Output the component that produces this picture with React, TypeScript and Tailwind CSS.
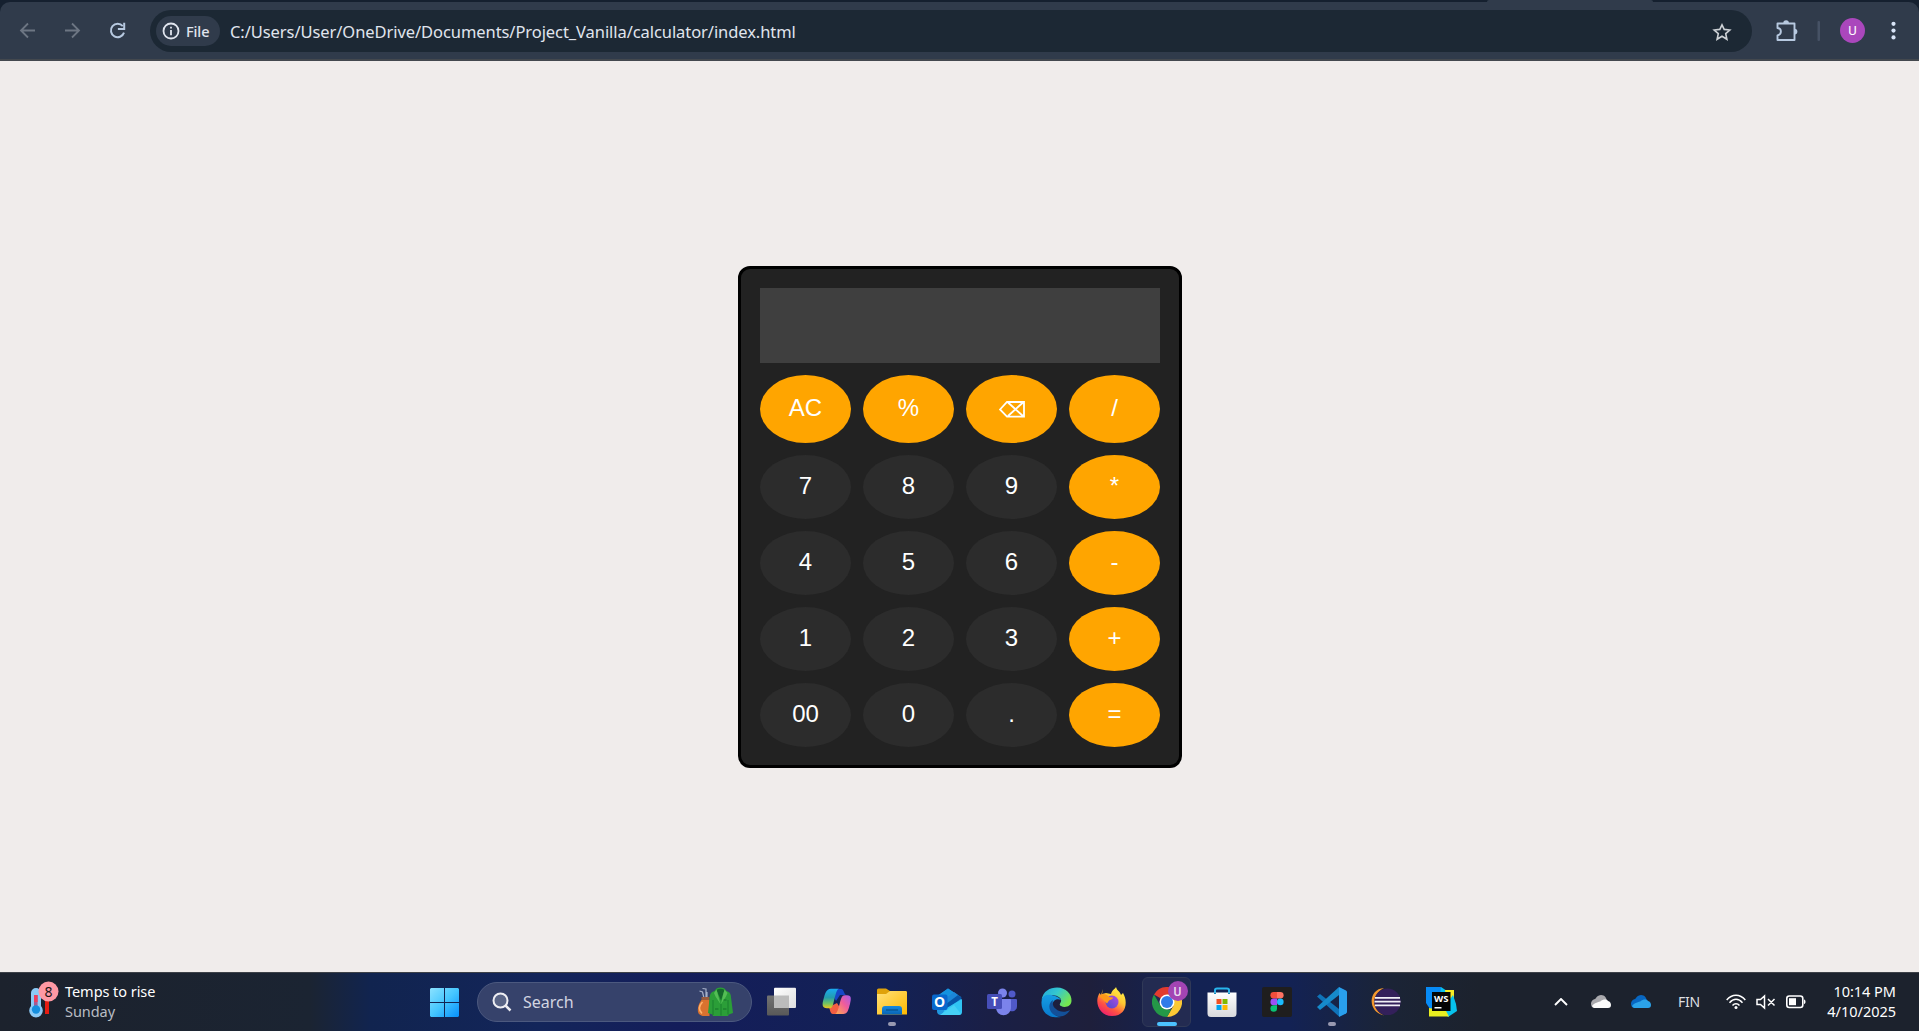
import React from "react";

const calculatorRows: string[][] = [
  ["AC", "%", "DEL", "/"],
  ["7", "8", "9", "*"],
  ["4", "5", "6", "-"],
  ["1", "2", "3", "+"],
  ["00", "0", ".", "="],
];

function BackspaceIcon() {
  return (
    <svg width="26" height="17" viewBox="0 0 26 17" fill="none" stroke="#fff" strokeWidth="1.8" className="mt-[3px]">
      <path d="M1 8.5 8 1H25V15.6H8ZM9 1.5 24 15M24 1.5 9 15" />
    </svg>
  );
}

function Calculator() {
  return (
    <section className="flex h-[502px] w-[444px] flex-col gap-3 rounded-xl border-[3px] border-black bg-[#222222] p-[19px] text-2xl text-white [font-family:'Liberation_Sans',Arial,sans-serif]">
      <div className="h-[75px] shrink-0 bg-[#3f3f3f]" />
      {calculatorRows.map((row, r) => (
        <div key={r} className={`grid shrink-0 grid-cols-4 gap-3 ${r === 0 ? "h-[68px]" : "h-16"}`}>
          {row.map((label, c) => (
            <button
              key={label}
              className={`flex items-center justify-center rounded-[50%] pb-[2px] leading-none ${r === 0 || c === 3 ? "bg-[#ffa500]" : "bg-[#2c2c2c]"}`}
            >
              {label === "DEL" ? <BackspaceIcon /> : label}
            </button>
          ))}
        </div>
      ))}
    </section>
  );
}

function BrowserBar() {
  return (
    <header className="flex h-[61px] shrink-0 flex-col bg-[#15202f]">
      <div className="flex h-[2px] justify-end pr-[266px]">
        <div className="w-[166px] rounded-t bg-[#303b4b]" />
      </div>
      <div className="flex h-[59px] items-start rounded-t-[10px] border-b-2 border-[#43484e] bg-[#303b4b] pt-2">
        <svg width="150" height="42" viewBox="0 0 150 42" fill="none">
          <path d="M35 20.5H21M28 13.5l-7 7 7 7" stroke="#6d7683" strokeWidth="1.8" />
          <path d="M65 20.5H79M72 13.5l7 7-7 7" stroke="#6d7683" strokeWidth="1.8" />
          <path d="M122.8 16.2A6.7 6.7 0 1 0 124 22.6" stroke="#b7c9e0" strokeWidth="2" />
          <path d="M124.2 12.8v6.3h-6.3" stroke="#b7c9e0" strokeWidth="2" />
        </svg>
        <div className="flex h-[42px] w-[1602px] items-center rounded-full bg-[#1c2834] pl-[6px] pr-[20px]">
          <div className="flex h-[30px] w-16 items-center rounded-full bg-[#303b4b] pl-[6px]">
            <svg width="18" height="18" viewBox="0 0 18 18" fill="none" stroke="#e0e5ee" strokeWidth="1.8">
              <circle cx="9" cy="9" r="7.5" />
              <path d="M9 8v5.2M9 4.7v1.8" />
            </svg>
            <span className="ml-[6px] text-[14.5px] font-medium leading-[18px] tracking-[-0.1px] text-[#e0e5ee] [font-family:'Noto_Sans',sans-serif]">File</span>
          </div>
          <span className="ml-[10px] whitespace-nowrap pt-px text-[16.5px] leading-6 tracking-[-0.07px] text-[#e0e5ee] [font-family:'Noto_Sans',sans-serif]">
            C:/Users/User/OneDrive/Documents/Project_Vanilla/calculator/index.html
          </span>
          <svg className="ml-auto mt-[2px]" width="20" height="20" viewBox="0 0 20 20" fill="none" stroke="#cdd1d5" strokeWidth="1.6">
            <path d="M10 2.8 12.2 7.4 17.8 8 13.7 11.6 14.9 17.3 10 14.3 5.1 17.3 6.3 11.6 2.2 8 7.8 7.4Z" />
          </svg>
        </div>
        <svg width="167" height="42" viewBox="0 0 167 42" fill="none">
          <path d="M25.5 13.5H42.5V30H25.5V25.5C30 24.5 30 18.5 25.5 18V13.5Z" stroke="#b7c9e0" strokeWidth="1.9" strokeLinejoin="round" />
          <path d="M31.3 13a2.8 2.8 0 0 1 5.6 0ZM42.5 18.7a2.9 2.9 0 0 1 0 5.8Z" fill="#b7c9e0" />
          <rect x="65.5" y="11" width="2.5" height="20" rx="1" fill="#465265" />
          <circle cx="100.5" cy="20.5" r="12.5" fill="#aa47bc" />
          <text x="100.5" y="25.2" textAnchor="middle" fontSize="13" fill="#fff" fontFamily="Roboto, sans-serif">U</text>
          <g fill="#d8e4f7">
            <circle cx="141.5" cy="13.8" r="2.1" />
            <circle cx="141.5" cy="20.6" r="2.1" />
            <circle cx="141.5" cy="27.4" r="2.1" />
          </g>
        </svg>
      </div>
    </header>
  );
}

function WeatherIcon() {
  return (
    <svg width="32" height="40" viewBox="0 0 32 40" className="-mt-[2px]">
      <path d="M18 18h4v15h-4z" fill="#e51c12" />
      <path d="M17 20l3-3 4 3z" fill="#e51c12" />
      <path d="M4 12a5 5 0 0 1 10 0v13a6.8 6.8 0 1 1-10 0Z" fill="#8ccaf6" />
      <path d="M7 14h3.6v14H7z" fill="#a55a93" />
      <path d="M7 14h3.6v7H7z" fill="#ee3d5c" />
      <circle cx="9" cy="28.5" r="4.2" fill="#158fdf" />
      <circle cx="21.5" cy="10.5" r="10" fill="#fe99a4" />
      <text x="21.5" y="15.6" textAnchor="middle" fontSize="14" fill="#1a1516" fontFamily="Noto Sans, sans-serif">8</text>
    </svg>
  );
}

function StartIcon() {
  return (
    <svg width="29" height="29" viewBox="0 0 29 29">
      <defs>
        <linearGradient id="start" x1="0" y1="0" x2="29" y2="29" gradientUnits="userSpaceOnUse">
          <stop stopColor="#8be2ff" />
          <stop offset=".5" stopColor="#45c6ff" />
          <stop offset="1" stopColor="#0790fb" />
        </linearGradient>
      </defs>
      <path fill="url(#start)" d="M1 0H14V14H0V1ZM15 0H28L29 1V14H15ZM0 15H14V29H1L0 28ZM15 15H29V28L28 29H15Z" />
    </svg>
  );
}

function GolfIcon() {
  return (
    <svg width="36" height="30" viewBox="0 0 36 30">
      <g stroke="#a6b0c9" strokeWidth="1.2" fill="none">
        <path d="M7 11 5.5 5 2.5 4M9 11V2L5.5 1.5M10 10V5" />
      </g>
      <path d="M4.5 10h8v3.5h-8z" fill="#9a5a3c" />
      <path d="M4.5 13h8v16H5.5C2 28 .5 26 .8 22.5 1 18 3 15 4.5 13z" fill="#d9722f" />
      <path d="M5.5 15c-4 4-4 8-.5 11.5" fill="none" stroke="#ffb06a" strokeWidth="1.6" />
      <path d="M17.5 4C19 1.5 20.5.5 23.5.5S28 1.5 29.5 4c2.5.8 3.8 2 4.3 4.5L36 26l-4.2 1.5-.8 1.5H16l-.6-1.5L11 26l1.8-17c.4-2.8 2-4.3 4.7-5Z" fill="#2b9e38" />
      <path d="M19.5 3c2.5-1.8 5.5-1.8 8 0L24 13.5Z" fill="#14692a" />
      <path d="M19.5 2.5 17 6l1.5 3.5L23.5 17 21 8ZM27.5 2.5 30.5 6l-1.5 3.5L24 17l2-9Z" fill="#54bd55" />
      <path d="M16 13v15M31 13v14.5M24 17v11.5" stroke="#187a2c" strokeWidth=".9" />
      <path d="M26.5 13h3M26 22h3.5M18 22h3.5" stroke="#157029" />
    </svg>
  );
}

function TaskViewIcon() {
  return (
    <svg width="30" height="30" viewBox="0 0 30 30">
      <defs>
        <linearGradient id="tv" x1="0" y1="0" x2="1" y2="1"><stop stopColor="#fff" /><stop offset="1" stopColor="#dedede" /></linearGradient>
        <linearGradient id="tv2" x1="0" y1="0" x2="0" y2="1"><stop stopColor="#737373" /><stop offset="1" stopColor="#585858" /></linearGradient>
      </defs>
      <rect y="8.5" width="22" height="20" rx="1" fill="url(#tv2)" />
      <rect x="7" y=".7" width="22" height="20.3" rx="1" fill="url(#tv)" />
      <path d="M7 8.5h15V21H7z" fill="#bcbcbc" />
    </svg>
  );
}

function CopilotIcon() {
  return (
    <svg width="30" height="30" viewBox="0 0 30 30">
      <defs>
        <linearGradient id="cpa" x1="0" y1="0" x2="0" y2="1"><stop stopColor="#1aaaf0" /><stop offset=".45" stopColor="#249cac" /><stop offset=".75" stopColor="#6fc264" /><stop offset="1" stopColor="#eec51c" /></linearGradient>
        <linearGradient id="cpb" x1="1" y1="0" x2="0" y2="1"><stop stopColor="#a55bee" /><stop offset=".45" stopColor="#ef5c9b" /><stop offset="1" stopColor="#ffb14a" /></linearGradient>
      </defs>
      <path d="M8 2h11c3 0 3 5 5 6h-6l-4 6z" fill="#1746c7" />
      <path d="M22 27H11c-3 0-3-5-4-7l8-4z" fill="#f35e42" />
      <path d="M9 1.8h8c-3 .7-4 9-6 16-1 3-2 3.5-4 3.5H5c-5 0-5-4-3.5-9C3 7 4 1.8 9 1.8Z" fill="url(#cpa)" />
      <path d="M21 27h-8c3-.7 4-9 6-15 1-3 2-3.8 4-3.8h2c5 0 4 4 3 8.8-1.5 5-2 10-7 10Z" fill="url(#cpb)" />
    </svg>
  );
}

function ExplorerIcon() {
  return (
    <svg width="30" height="30" viewBox="0 0 30 30">
      <defs>
        <linearGradient id="fe" x1="0" y1="0" x2="1" y2="1"><stop stopColor="#ffe17a" /><stop offset="1" stopColor="#ffb900" /></linearGradient>
        <linearGradient id="fb" x1="0" y1="0" x2="0" y2="1"><stop stopColor="#168ae0" /><stop offset="1" stopColor="#0964b4" /></linearGradient>
      </defs>
      <path d="M0 8V3a1.500 1.500 0 0 1 1.500-1.500H9L13 4h15a2 2 0 0 1 2 2v3z" fill="#dfa20a" />
      <path d="M0 7h9l4-3h16l1 1v22.500H0z" fill="url(#fe)" />
      <path d="M5 27.500V22a3 3 0 0 1 3-3h14a3 3 0 0 1 3 3v5.500z" fill="url(#fb)" />
      <path d="M9 23h12" stroke="#07508d" strokeWidth="1.2" />
    </svg>
  );
}

function OutlookIcon() {
  return (
    <svg width="30" height="30" viewBox="0 0 30 30">
      <path d="M5 9 16 1.500 29 10v15a3 3 0 0 1-3 3H9a4 4 0 0 1-4-4z" fill="#1f96df" />
      <path d="M6 9 16 1.500 21 5 11 12z" fill="#1492df" />
      <path d="m14 11 8-6 4 3-12 9z" fill="#1b86d8" />
      <path d="m14 17 12-9 4 3-15 11z" fill="#0755a9" />
      <path d="M13 22 30 12v13a3 3 0 0 1-3 3H10z" fill="#30c4f4" />
      <path d="m8 28 14-10 7 9-2 1z" fill="#45d0f6" />
      <rect y="7.500" width="15.500" height="15.500" rx="2" fill="#0868cd" />
      <text x="7.700" y="20" textAnchor="middle" fontSize="14" fontWeight="700" fill="#fff" fontFamily="Open Sans, sans-serif">O</text>
    </svg>
  );
}

function TeamsIcon() {
  return (
    <svg width="30" height="30" viewBox="0 0 30 30">
      <circle cx="25" cy="7" r="3.500" fill="#5059c9" />
      <circle cx="15.500" cy="6" r="4.500" fill="#7b83eb" />
      <path d="M20 12h9a1 1 0 0 1 1 1v6c0 4-3 6-7 5z" fill="#5059c9" />
      <path d="M10 12h13a1 1 0 0 1 1 1v7c0 11-15 11-15 0z" fill="#7b83eb" />
      <rect y="7" width="15" height="15" rx="1.500" fill="#464eb8" />
      <text x="7.500" y="18.500" textAnchor="middle" fontSize="11.500" fontWeight="700" fill="#fff" fontFamily="Open Sans, sans-serif">T</text>
    </svg>
  );
}

function EdgeIcon() {
  return (
    <svg width="31" height="31" viewBox="0 0 31 31">
      <defs>
        <linearGradient id="ea" x1="0" y1="0" x2="1" y2=".55"><stop stopColor="#20a5dc" /><stop offset=".5" stopColor="#35c8cf" /><stop offset="1" stopColor="#75e550" /></linearGradient>
        <linearGradient id="eb" x1="0" y1="0" x2="0" y2="1"><stop stopColor="#169ee4" /><stop offset="1" stopColor="#0879cd" /></linearGradient>
      </defs>
      <path d="M.5 13C2 4 9 .5 16 .5 25 .5 31 7 30.500 14c-.5 6-7 7-10.500 5-3-1.500.5-3 .1-6C19.500 8 5 5 .5 13Z" fill="url(#ea)" />
      <path d="M.5 15C1 6 10 7 14 9c3 1 5 2 6 4-4-2-9 0-9 7 0 6 4 10 9 10C8 32 0 25 .5 15Z" fill="url(#eb)" />
      <path d="M12 13c-8 5-2 19 10 16 3-1 6-4 7-6-5 3-11 2-14-1-3-2-4-6-3-9Z" fill="#135099" />
    </svg>
  );
}

function FirefoxIcon() {
  return (
    <svg width="30" height="30" viewBox="0 0 30 30">
      <defs>
        <linearGradient id="ff" x1=".8" y1="0" x2=".2" y2="1"><stop stopColor="#fff34a" /><stop offset=".38" stopColor="#ffc631" /><stop offset=".68" stopColor="#ff5441" /><stop offset="1" stopColor="#e91675" /></linearGradient>
        <linearGradient id="fp" x1="1" y1="0" x2="0" y2="1"><stop stopColor="#b44be0" /><stop offset="1" stopColor="#484ac9" /></linearGradient>
      </defs>
      <path d="m6 2-1 5 4-1 5 1c1-4 4-5 5-7 1 4 4 4 5 8l2-2c5 8 4 23-11 23C2 29-3 15 2.500 6L4 8z" fill="url(#ff)" />
      <circle cx="15" cy="15" r="6.500" fill="url(#fp)" />
      <path d="M2 9c4-3 8-2 10 1l4 .5c0 2-3 2-4 3l-2 3-4-4z" fill="#ff9819" />
    </svg>
  );
}

function ChromeIcon() {
  return (
    <svg width="30" height="30" viewBox="0 0 30 30">
      <path d="M15 15 2 7.500A15 15 0 0 1 28 7.500H15Z" fill="#e33b2e" />
      <path d="M15 15 28 7.500A15 15 0 0 1 15 30l6.500-11.250Z" fill="#fcc934" />
      <path d="M2 7.500 8.500 18.750 15 22.500h4.300L15 30A15 15 0 0 1 2 7.500Z" fill="#249847" />
      <path d="M15 7.500h13l-6.500 11.250z" fill="#fcc934" />
      <circle cx="15" cy="15" r="7.500" fill="#fff" />
      <circle cx="15" cy="15" r="6" fill="#2f7bea" />
    </svg>
  );
}

function ChromeWindow() {
  return (
    <div className="relative">
      <ChromeIcon />
      <span className="absolute -right-[6px] -top-[6px] flex h-5 w-5 items-center justify-center rounded-full bg-[#a344b3] pt-px text-[12px] font-medium leading-none text-[#eadcf0] [font-family:Roboto,sans-serif]">U</span>
    </div>
  );
}

function StoreIcon() {
  return (
    <svg width="30" height="30" viewBox="0 0 30 30">
      <defs><linearGradient id="store" x1="0" y1="0" x2="0" y2="1"><stop stopColor="#fff" /><stop offset="1" stopColor="#d8d9dc" /></linearGradient></defs>
      <path d="M8 7V3c0-1 1-1.500 2-1.500h10c1 0 2 .5 2 1.500v4" stroke="#28b5ed" strokeWidth="2" fill="none" />
      <path d="M.5 5.500h29v21a3.500 3.500 0 0 1-3.500 3.500H4a3.500 3.500 0 0 1-3.500-3.500z" fill="url(#store)" />
      <path d="M8 7V5.500M22 7V5.500" stroke="#168cbd" strokeWidth="2" />
      <path fill="#f25022" d="M9.500 12H14.500V17H9.500z" /><path fill="#7fba00" d="M15.500 12H20.500V17H15.500z" />
      <path fill="#00a4ef" d="M9.500 18H14.500V23H9.500z" /><path fill="#ffb900" d="M15.500 18H20.500V23H15.500z" />
    </svg>
  );
}

function FigmaIcon() {
  return (
    <svg width="30" height="30" viewBox="0 0 30 30">
      <rect width="30" height="30" rx="2" fill="#1f1e1e" />
      <path d="M15 5h-3.300a3.300 3.300 0 0 0 0 6.600H15z" fill="#f24e3c" />
      <path d="M15 5h3.300a3.300 3.300 0 0 1 0 6.600H15z" fill="#ff7262" />
      <path d="M15 11.600h-3.300a3.300 3.300 0 0 0 0 6.600H15z" fill="#9d50f5" />
      <circle cx="18.300" cy="14.900" r="3.300" fill="#1abcfe" />
      <path d="M15 18.200h-3.300a3.300 3.300 0 1 0 3.300 3.300z" fill="#0ac275" />
    </svg>
  );
}

function VSCodeIcon() {
  return (
    <svg width="30" height="30" viewBox="0 0 30 30">
      <path d="M0 9.500 3 7l19 15v7.500z" fill="#0f73b9" />
      <path d="m0 20 22-20v8L3 23z" fill="#168acb" />
      <path d="m22 0 7 3.500c.7.4 1 1 1 1.500v20c0 .6-.3 1.100-1 1.500L22 30z" fill="#299fed" />
    </svg>
  );
}

function EclipseIcon() {
  return (
    <svg width="31" height="30" viewBox="0 0 31 30">
      <path d="M13 1C-3 2-4 25 13 28.500 0 22 1 7 13 1Z" fill="#f3982e" />
      <circle cx="16.500" cy="14.800" r="13.300" fill="#33205a" />
      <g fill="#f2f1f7"><path d="M4 10h25v1.700H4zM3.500 13.800h26v1.800h-26zM4 17.600h25v1.700H4z" /></g>
    </svg>
  );
}

function WebStormIcon() {
  return (
    <svg width="31" height="30" viewBox="0 0 31 30">
      <path d="M0 0h15l3 15-3 9-11-2-4-6z" fill="#078bf6" />
      <path d="M15 0 21 4l-7 8z" fill="#08c1ee" />
      <path d="m19 3 9 0v9l-8 0z" fill="#f6ed24" />
      <path d="m27 8 3 9 1 7-9 6-6-7z" fill="#07c3ee" />
      <path d="m3 21 17 3 3 5.500H3z" fill="#e8ee20" />
      <path d="M6 5h18.500v19H6z" fill="#050505" />
      <text x="15.300" y="15.300" textAnchor="middle" fontSize="9.500" fontWeight="700" fill="#fff" fontFamily="Open Sans, sans-serif">WS</text>
      <path d="M8.500 20h7v1.500h-7z" fill="#fff" />
    </svg>
  );
}

const pinnedApps: { name: string; Icon: () => React.ReactElement; state?: "open" | "active" }[] = [
  { name: "Task view", Icon: TaskViewIcon },
  { name: "Copilot", Icon: CopilotIcon },
  { name: "File Explorer", Icon: ExplorerIcon, state: "open" },
  { name: "Outlook", Icon: OutlookIcon },
  { name: "Teams", Icon: TeamsIcon },
  { name: "Edge", Icon: EdgeIcon },
  { name: "Firefox", Icon: FirefoxIcon },
  { name: "Chrome", Icon: ChromeWindow, state: "active" },
  { name: "Store", Icon: StoreIcon },
  { name: "Figma", Icon: FigmaIcon },
  { name: "Code", Icon: VSCodeIcon, state: "open" },
  { name: "Eclipse", Icon: EclipseIcon },
  { name: "WebStorm", Icon: WebStormIcon },
];

function CloudIcon({ back, front }: { back: string; front: string }) {
  return (
    <svg width="20" height="14" viewBox="0 0 20 14">
      <path d="M3 6C5 2 7 0 10 0c4 0 5 3 6 5l-7 5z" fill={back} />
      <path d="M0 8c1-4 5-5 7-3l10 7-13 1c-3 0-4-2-4-5Z" fill={back} />
      <path d="M1 11c2-3 7-4 9-5 2-2 6-2 7 0 4 1 4 7 0 7H4c-1 0-2-.5-3-2Z" fill={front} />
    </svg>
  );
}

function Tray() {
  return (
    <div className="ml-auto flex items-center pr-[23px] text-white">
      <svg width="14" height="8" viewBox="0 0 14 8" fill="none" stroke="#fff" strokeWidth="1.9"><path d="m1 7 6-6 6 6" /></svg>
      <div className="ml-[23px]"><CloudIcon back="#a9a9ad" front="#fafafa" /></div>
      <div className="ml-5"><CloudIcon back="#0867c1" front="#2ba3e9" /></div>
      <span className="ml-[27px] w-[24px] text-[14px] leading-none tracking-[-0.3px] text-[#dedfe1]">FIN</span>
      <svg className="ml-[24px]" width="20" height="16" viewBox="0 0 20 16" fill="none" stroke="#fff" strokeWidth="1.5">
        <path d="M.7 6C6-.4 14-.4 19.300 6M3.500 8.700c4-4.500 9-4.500 13 0M6.500 11.500c2-2.300 5-2.300 7 0" />
        <circle cx="10" cy="13.500" r="1.500" fill="#fff" stroke="none" />
      </svg>
      <svg className="ml-[10px]" width="20" height="16" viewBox="0 0 20 16" fill="none" stroke="#fff" strokeWidth="1.5">
        <path d="M1 5.500h3.500L8.500 2v12l-4-3.500H1zM12 5l6.500 6.500M18.500 5 12 11.500" />
      </svg>
      <svg className="ml-[10px]" width="20" height="14" viewBox="0 0 20 14">
        <rect x=".8" y="1" width="16" height="11.500" rx="2.500" fill="none" stroke="#fff" strokeWidth="1.6" />
        <path d="M3 3.200h7v7H3z" fill="#fff" /><path d="M18 4.500c2 0 2 4.500 0 4.500z" fill="#fff" />
      </svg>
      <div className="w-[90px] whitespace-nowrap pb-[2px] text-right text-[14.5px] leading-5 tracking-[-0.02px]">
        <div>10:14 PM</div>
        <div>4/10/2025</div>
      </div>
    </div>
  );
}

function Taskbar() {
  return (
    <footer className="flex h-[59px] shrink-0 items-center border-t border-[#3d4148] bg-[linear-gradient(90deg,#1c222d_0px,#1b2432_310px,#11244f_370px,#13255a_540px,#141d5a_680px,#132155_890px,#1a1f46_990px,#1e1f3b_1090px,#132253_1190px,#132254_1290px,#1b2436_1390px,#1c222d_1480px)] [font-family:'Noto_Sans',sans-serif]">
      <div className="flex w-[430px] items-center pl-[27px]">
        <WeatherIcon />
        <div className="ml-[6px] whitespace-nowrap pb-[2px] text-[14.5px] leading-5 tracking-[-0.05px]">
          <div className="text-white">Temps to rise</div>
          <div className="text-[#b9bdc3]">Sunday</div>
        </div>
      </div>
      <StartIcon />
      <div className="ml-[18px] flex h-10 w-[275px] items-center rounded-full border border-[#4c597f] bg-[#36426b] pl-[14px] pr-[18px]">
        <svg width="20" height="20" viewBox="0 0 20 20" fill="#596486" stroke="#eeeef3" strokeWidth="2"><circle cx="8.500" cy="8.500" r="7" /><path d="m13.500 13.500 5 5" strokeWidth="2.5" /></svg>
        <span className="ml-[11px] text-base leading-5 text-[#d2d5e1]">Search</span>
        <span className="ml-auto"><GolfIcon /></span>
      </div>
      <nav className="ml-[2px] flex h-full">
        {pinnedApps.map(({ name, Icon, state }) => (
          <div key={name} title={name} className="relative flex h-full w-[55px] items-center justify-center">
            {state === "active" && <div className="absolute inset-x-[3px] inset-y-1 rounded-md border border-[#303957] bg-[#232b51]" />}
            <div className="relative"><Icon /></div>
            {state && <div className={`absolute bottom-[5px] h-1 rounded-full ${state === "active" ? "w-5 bg-[#4cc2ff]" : "w-2 bg-[#9899b0]"}`} />}
          </div>
        ))}
      </nav>
      <Tray />
    </footer>
  );
}

export default function App() {
  return (
    <div className="flex h-[1031px] w-full flex-col overflow-hidden bg-[#f0eceb]">
      <BrowserBar />
      <main className="flex flex-1 items-center justify-center pl-px pt-px">
        <Calculator />
      </main>
      <Taskbar />
    </div>
  );
}
